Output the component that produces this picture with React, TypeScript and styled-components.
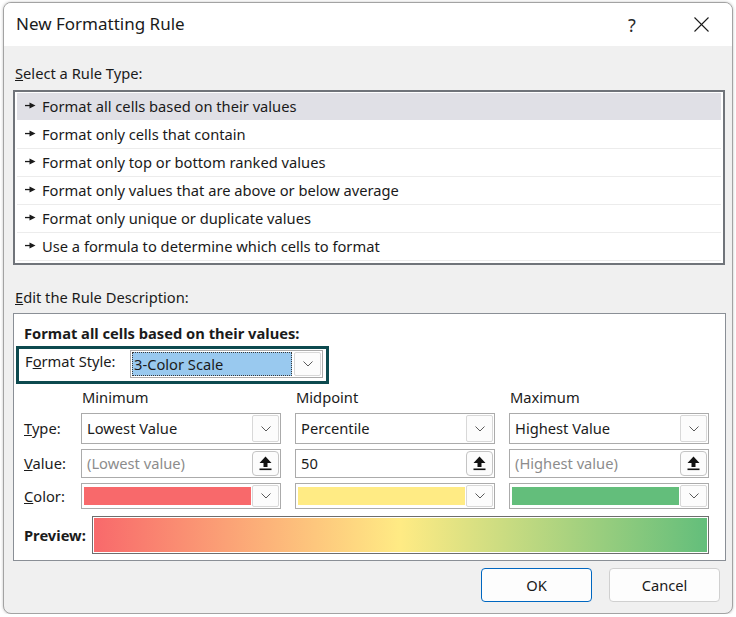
import * as React from 'react';
import styled, { createGlobalStyle } from 'styled-components';

const GlobalStyle = createGlobalStyle`
    html, body {
        margin: 0;
        padding: 0;
        background: #ffffff;
    }
    body {
        font-family: "Noto Sans", "Open Sans", sans-serif;
        font-size: 14.7px;
        color: #1b1b1b;
    }
`;

const RULE_TYPES = [
    'Format all cells based on their values',
    'Format only cells that contain',
    'Format only top or bottom ranked values',
    'Format only values that are above or below average',
    'Format only unique or duplicate values',
    'Use a formula to determine which cells to format'
];

const Window = styled.div`
    box-sizing: border-box;
    margin: 2px 0 0 3px;
    width: 730px;
    height: 612px;
    border: 1px solid #a3a3a3;
    border-radius: 8px;
    background: #f0f0f0;
    overflow: hidden;
    display: flex;
    flex-direction: column;
    box-shadow: 0 0 3px rgba(0, 0, 0, 0.25);
`;

const TitleBar = styled.div`
    height: 43px;
    flex-shrink: 0;
    background: #ffffff;
    display: flex;
    align-items: center;
    padding-left: 12px;
`;

const Title = styled.div`
    flex-grow: 1;
    font-size: 17px;
    color: #1a1a1a;
    padding-bottom: 2px;
`;

const TitleButton = styled.div<{ $width: number }>`
    width: ${p => p.$width}px;
    height: 43px;
    display: flex;
    align-items: center;
    justify-content: center;
    font-size: 18px;
    color: #2a2a2a;
`;

const Body = styled.div`
    flex-grow: 1;
    display: flex;
    flex-direction: column;
    padding: 18px 4px 0 9px;
`;

const SectionLabel = styled.div<{ $gap: number }>`
    line-height: 18px;
    padding: 0 0 2px 2px;
    margin-bottom: ${p => p.$gap}px;
`;

const RuleList = styled.div`
    box-sizing: border-box;
    width: 712px;
    height: 175px;
    border: 2px solid #70747a;
    background: #ffffff;
    padding: 1px 2px 2px 2px;
    margin-bottom: 23px;
`;

const RuleRow = styled.div<{ $selected?: boolean }>`
    box-sizing: border-box;
    height: 28px;
    display: flex;
    align-items: center;
    padding: 0 0 2px 8px;
    gap: 6px;
    background: ${p => p.$selected ? '#e0e0e6' : '#ffffff'};
    border-bottom: 1px solid ${p => p.$selected ? '#ffffff' : '#ececec'};
    color: #1a1a1a;
`;

const DescPanel = styled.div`
    box-sizing: border-box;
    width: 713px;
    height: 248px;
    border: 1px solid #8a8f96;
    background: #ffffff;
    padding: 9px 0 0 2px;
    display: flex;
    flex-direction: column;
`;

const DescHeading = styled.div`
    line-height: 20px;
    font-weight: 700;
    padding-left: 8px;
    margin-bottom: 3px;
`;

const StyleHighlight = styled.div`
    box-sizing: border-box;
    width: 313px;
    height: 38px;
    border: 3px solid #0d4a4f;
    display: flex;
    align-items: flex-start;
    padding: 1px 0 0 6px;
`;

const StyleLabel = styled.div`
    width: 105px;
    line-height: 22px;
`;

const Combo = styled.div<{ $width?: number; $height: number }>`
    box-sizing: border-box;
    width: ${p => p.$width ? `${p.$width}px` : '100%'};
    height: ${p => p.$height}px;
    border: 1px solid #ababab;
    background: #ffffff;
    display: flex;
    align-items: stretch;
    padding: 1px;
`;

const ComboValue = styled.div<{ $selected?: boolean; $placeholder?: boolean }>`
    flex-grow: 1;
    display: flex;
    align-items: center;
    padding: 0 0 1px ${p => p.$selected ? 2 : 4}px;
    color: ${p => p.$placeholder ? '#8c8c8c' : '#1b1b1b'};
    background: ${p => p.$selected ? '#99c9ef' : 'transparent'};
    outline: ${p => p.$selected ? '1px dotted #3a3a3a' : 'none'};
    outline-offset: -1px;
    margin-right: ${p => p.$selected ? 2 : 0}px;
    white-space: nowrap;
`;

const ComboButton = styled.div<{ $raised?: boolean }>`
    box-sizing: border-box;
    width: 27px;
    flex-shrink: 0;
    border: 1px solid ${p => p.$raised ? '#c4c4c4' : '#d8d8d8'};
    border-radius: ${p => p.$raised ? 4 : 2}px;
    background: #fcfcfc;
    display: flex;
    align-items: center;
    justify-content: center;
`;

const Swatch = styled.div<{ $color: string }>`
    flex-grow: 1;
    margin: 2px 1px 2px 1px;
    background: ${p => p.$color};
`;

const ScaleGrid = styled.div`
    display: grid;
    grid-template-columns: 43px 200px 200px 200px;
    grid-template-rows: 20px 31px 29px 26px;
    column-gap: 14px;
    row-gap: 5px;
    padding-left: 8px;
    margin-top: 4px;
`;

const ColHeader = styled.div`
    line-height: 18px;
    padding-left: 1px;
`;

const RowLabel = styled.div`
    display: flex;
    align-items: center;
    padding-bottom: 1px;
    white-space: nowrap;
`;

const PreviewRow = styled.div`
    display: flex;
    align-items: center;
    padding-left: 8px;
    margin-top: 7px;
`;

const PreviewLabel = styled.div`
    width: 68px;
    font-weight: 700;
    padding-bottom: 1px;
`;

const PreviewBar = styled.div`
    box-sizing: border-box;
    width: 617px;
    height: 38px;
    border: 1px solid #6e6e6e;
    padding: 1px;
    background: #ffffff;
`;

const PreviewFill = styled.div`
    width: 100%;
    height: 100%;
    background: linear-gradient(to right, #f8696b 0%, #ffeb84 50%, #63be7b 100%);
`;

const ButtonRow = styled.div`
    display: flex;
    justify-content: flex-end;
    gap: 17px;
    padding: 7px 8px 0 0;
`;

const DialogButton = styled.div<{ $primary?: boolean }>`
    box-sizing: border-box;
    width: 111px;
    height: 34px;
    border: 1px solid ${p => p.$primary ? '#0067c0' : '#d0d0d0'};
    border-radius: 4px;
    background: #fdfdfd;
    display: flex;
    align-items: center;
    justify-content: center;
    padding-bottom: 1px;
    color: #1a1a1a;
`;

const RuleArrow = () => (
    <svg width="11" height="7" viewBox="0 0 11 7">
        <rect x="0" y="2.9" width="6" height="1.3" fill="#1a1a1a" />
        <polygon points="4.5,0.5 10.5,3.5 4.5,6.5" fill="#1a1a1a" />
    </svg>
);

const Chevron = () => (
    <svg width="10" height="6" viewBox="0 0 10 6">
        <polyline points="0.5,0.5 5,5 9.5,0.5" fill="none" stroke="#5a5a5a" strokeWidth="1" />
    </svg>
);

const UploadIcon = () => (
    <svg width="13" height="15" viewBox="0 0 13 15">
        <polygon points="6.5,0.5 12.5,7 8.5,7 8.5,11 4.5,11 4.5,7 0.5,7" fill="#111" />
        <rect x="0.5" y="12.5" width="12" height="1.6" fill="#111" />
    </svg>
);

const CloseIcon = () => (
    <svg width="15" height="15" viewBox="0 0 15 15">
        <line x1="0.5" y1="0.5" x2="14.5" y2="14.5" stroke="#1a1a1a" strokeWidth="1.1" />
        <line x1="14.5" y1="0.5" x2="0.5" y2="14.5" stroke="#1a1a1a" strokeWidth="1.1" />
    </svg>
);

interface ScaleColumn {
    header: string;
    type: string;
    value: string;
    placeholder: boolean;
    color: string;
}

const COLUMNS: ScaleColumn[] = [
    { header: 'Minimum', type: 'Lowest Value', value: '(Lowest value)', placeholder: true, color: '#f8696b' },
    { header: 'Midpoint', type: 'Percentile', value: '50', placeholder: false, color: '#ffeb84' },
    { header: 'Maximum', type: 'Highest Value', value: '(Highest value)', placeholder: true, color: '#63be7b' }
];

const App: React.FC = () => {

    const getRuleRows = () => {
        return RULE_TYPES.map((label, idx) => (
            <RuleRow key={`rule-${idx}`} $selected={idx === 0}>
                <RuleArrow />
                <span>{label}</span>
            </RuleRow>
        ));
    };

    const getScaleCells = () => {
        const headers = COLUMNS.map(c => <ColHeader key={`h-${c.header}`}>{c.header}</ColHeader>);

        const types = COLUMNS.map(c => (
            <Combo key={`t-${c.header}`} $height={31}>
                <ComboValue>{c.type}</ComboValue>
                <ComboButton><Chevron /></ComboButton>
            </Combo>
        ));

        const values = COLUMNS.map(c => (
            <Combo key={`v-${c.header}`} $height={29}>
                <ComboValue $placeholder={c.placeholder}>{c.value}</ComboValue>
                <ComboButton $raised><UploadIcon /></ComboButton>
            </Combo>
        ));

        const colors = COLUMNS.map(c => (
            <Combo key={`c-${c.header}`} $height={26}>
                <Swatch $color={c.color} />
                <ComboButton><Chevron /></ComboButton>
            </Combo>
        ));

        return [
            <div key='blank' />, ...headers,
            <RowLabel key='l-type'><span><u>T</u>ype:</span></RowLabel>, ...types,
            <RowLabel key='l-value'><span><u>V</u>alue:</span></RowLabel>, ...values,
            <RowLabel key='l-color'><span><u>C</u>olor:</span></RowLabel>, ...colors
        ];
    };

    return (
        <>
            <GlobalStyle />
            <Window>
                <TitleBar>
                    <Title>New Formatting Rule</Title>
                    <TitleButton $width={76}>?</TitleButton>
                    <TitleButton $width={62}><CloseIcon /></TitleButton>
                </TitleBar>

                <Body>
                    <SectionLabel $gap={6}><u>S</u>elect a Rule Type:</SectionLabel>
                    <RuleList>
                        { getRuleRows() }
                    </RuleList>

                    <SectionLabel $gap={5}><u>E</u>dit the Rule Description:</SectionLabel>
                    <DescPanel>
                        <DescHeading>Format all cells based on their values:</DescHeading>

                        <StyleHighlight>
                            <StyleLabel>F<u>o</u>rmat Style:</StyleLabel>
                            <Combo $width={193} $height={28}>
                                <ComboValue $selected>3-Color Scale</ComboValue>
                                <ComboButton><Chevron /></ComboButton>
                            </Combo>
                        </StyleHighlight>

                        <ScaleGrid>
                            { getScaleCells() }
                        </ScaleGrid>

                        <PreviewRow>
                            <PreviewLabel>Preview:</PreviewLabel>
                            <PreviewBar>
                                <PreviewFill />
                            </PreviewBar>
                        </PreviewRow>
                    </DescPanel>

                    <ButtonRow>
                        <DialogButton $primary>OK</DialogButton>
                        <DialogButton>Cancel</DialogButton>
                    </ButtonRow>
                </Body>
            </Window>
        </>
    );
};

export default App;
